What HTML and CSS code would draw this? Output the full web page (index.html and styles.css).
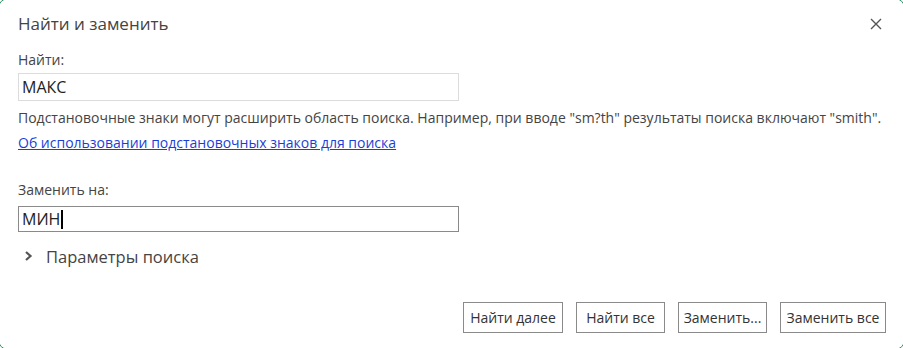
FILE: index.html
```html
<!DOCTYPE html>
<html lang="ru">
<head>
    <meta charset="UTF-8">
    <title>Найти и заменить</title>
    <link rel="stylesheet" href="styles.css">
</head>
<body>
    <div class="dialog">
        <div class="dialog-header">
            <h1>Найти и заменить</h1>
            <button class="close-button" aria-label="Закрыть">
                <svg width="12" height="12" viewBox="0 0 12 12"><path d="M1 1 L11 11 M11 1 L1 11" stroke="#555" stroke-width="1.4" fill="none"/></svg>
            </button>
        </div>

        <label class="field-label">Найти:</label>
        <div class="text-input">МАКС</div>
        <p class="hint">Подстановочные знаки могут расширить область поиска. Например, при вводе "sm?th" результаты поиска включают "smith".</p>
        <a class="help-link" href="#">Об использовании подстановочных знаков для поиска</a>

        <label class="field-label replace-label">Заменить на:</label>
        <div class="text-input focused">МИН<span class="caret"></span></div>

        <div class="options-toggle">
            <svg width="10" height="12" viewBox="0 0 10 12"><path d="M3 2 L7.5 6 L3 10" stroke="#555" stroke-width="2.2" fill="none"/></svg>
            <span>Параметры поиска</span>
        </div>

        <div class="dialog-buttons">
            <button class="btn btn-next">Найти далее</button>
            <button class="btn btn-all">Найти все</button>
            <button class="btn btn-replace">Заменить...</button>
            <button class="btn btn-replace-all">Заменить все</button>
        </div>
    </div>
</body>
</html>
```

FILE: styles.css
```css
body {
    margin: 0;
    padding: 0;
    background: #ffffff;
    font-family: "Open Sans", "Liberation Sans", sans-serif;
    color: #444444;
    overflow: hidden;
}

.dialog {
    box-sizing: border-box;
    width: calc(100vw + 4px);
    height: calc(100vh + 4px);
    margin: -2px;
    border: 1px solid #2e9466;
    border-radius: 10px;
    background: #ffffff;
    padding: 13px 18px 0 19px;
    display: flex;
    flex-direction: column;
}

.dialog-header {
    display: flex;
    justify-content: space-between;
    align-items: center;
    height: 24px;
}

.dialog-header h1 {
    margin: 0;
    font-size: 17px;
    line-height: 24px;
    font-weight: normal;
    color: #444444;
}

.close-button {
    border: none;
    background: none;
    padding: 0;
    margin-right: 4px;
    display: flex;
}

.field-label {
    font-size: 14px;
    line-height: 18px;
    margin-top: 15px;
}

.replace-label {
    margin-top: 29px;
}

.text-input {
    box-sizing: border-box;
    width: 441px;
    height: 28px;
    margin-top: 4px;
    border: 1px solid #dcdcdc;
    padding: 0 3px;
    font-size: 16px;
    color: #222222;
    line-height: 26px;
}

.text-input.focused {
    border-color: #8a8a8a;
    height: 26px;
    line-height: 24px;
    margin-top: 7px;
}

.caret {
    display: inline-block;
    width: 2px;
    height: 19px;
    background: #000000;
    vertical-align: -4px;
    margin-left: 1px;
}

.hint {
    margin: 8px 0 0;
    font-size: 14px;
    line-height: 18px;
}

.help-link {
    margin-top: 7px;
    font-size: 14px;
    line-height: 18px;
    color: #1a3fd6;
    align-self: flex-start;
}

.options-toggle {
    display: flex;
    align-items: center;
    height: 22px;
    margin-top: 13px;
    padding-left: 5px;
    font-size: 16.5px;
    gap: 13px;
}

.dialog-buttons {
    display: flex;
    justify-content: flex-end;
    gap: 13px;
    margin-top: 35px;
}

.btn {
    height: 31px;
    padding: 0;
    border: 1px solid #8a8a8a;
    background: #ffffff;
    font-family: "Open Sans", "Liberation Sans", sans-serif;
    font-size: 14px;
    color: #333333;
}

.btn-next {
    width: 100px;
}

.btn-all {
    width: 89px;
}

.btn-replace {
    width: 89px;
}

.btn-replace-all {
    width: 106px;
}
```
